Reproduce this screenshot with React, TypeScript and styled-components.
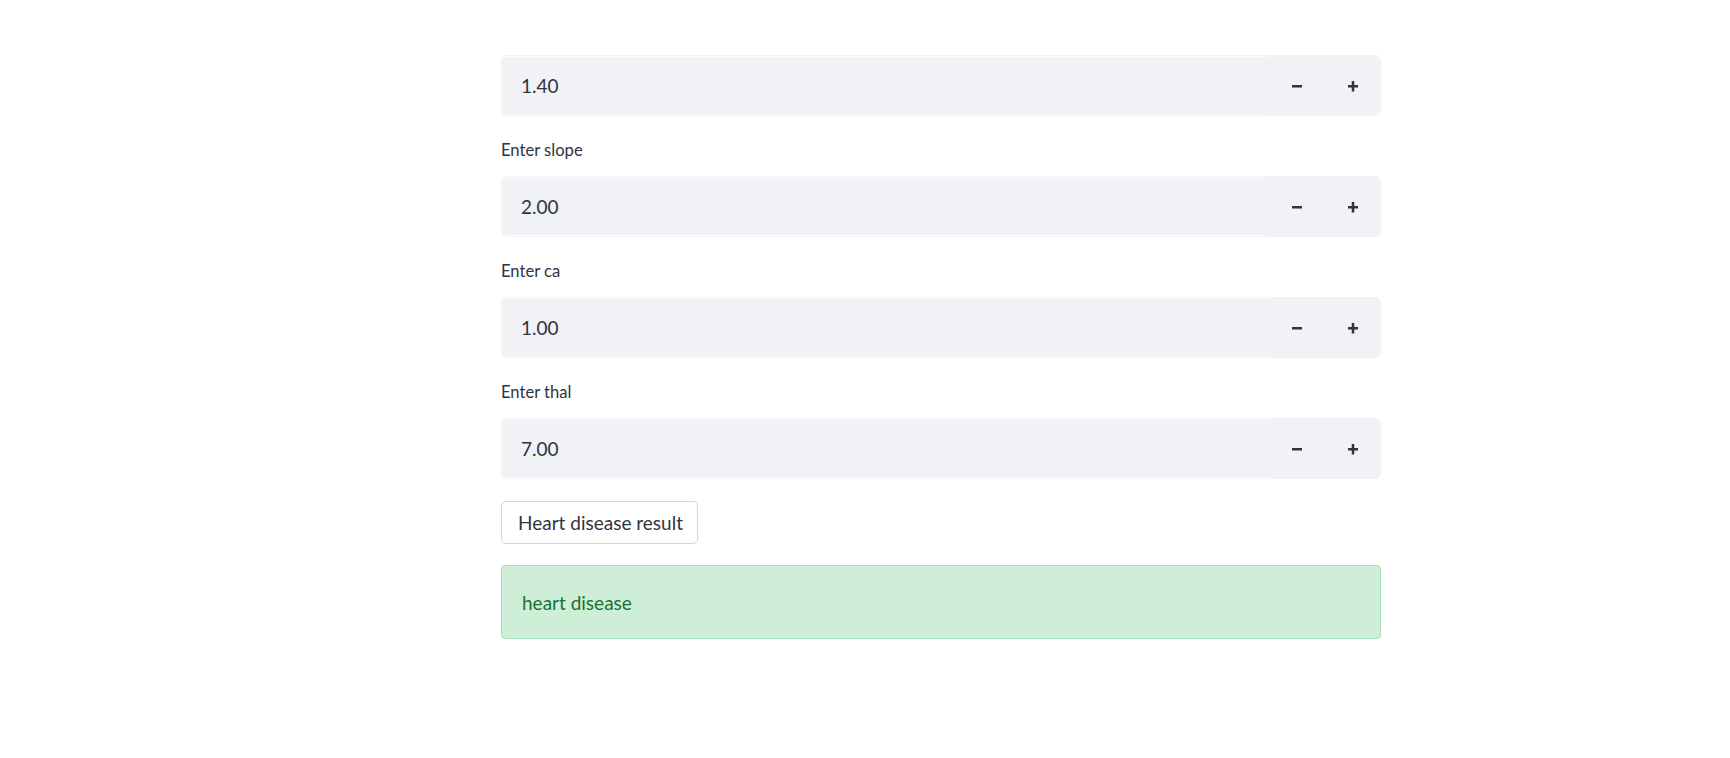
import React from "react";
import styled, { createGlobalStyle } from "styled-components";

const Global = createGlobalStyle`
  html, body { margin: 0; padding: 0; background: #ffffff; }
  body { font-family: "Lato", "Noto Sans", sans-serif; color: #31333f; }
`;

const Page = styled.div`
  width: 100%;
  display: flex;
  padding-left: 501px;
  box-sizing: border-box;
`;

const Main = styled.main`
  width: 880px;
  padding-top: 55px;
  display: flex;
  flex-direction: column;
`;

const Block = styled.div<{ $gap?: number }>`
  display: flex;
  flex-direction: column;
  margin-bottom: ${(p) => p.$gap ?? 22}px;
`;

const Label = styled.label`
  font-size: 16.6px;
  line-height: 24px;
  height: 24px;
  margin-bottom: 14px;
  color: #31333f;
`;

const InputBox = styled.div`
  height: 61px;
  box-sizing: border-box;
  display: flex;
  background: #f0f2f6;
  border-radius: 6px;
  overflow: hidden;
`;

const Field = styled.div`
  flex: 1;
  box-sizing: border-box;
  display: flex;
  align-items: center;
  padding-left: 20px;
  border-top: 1px solid #fafbfc;
  border-bottom: 1px solid #fafbfc;
  margin: 1px 0;
  font-size: 19px;
  color: #31333f;
`;

const Step = styled.button`
  width: 56px;
  height: 100%;
  border: none;
  background: transparent;
  padding: 0;
  display: flex;
  align-items: center;
  justify-content: center;
  color: #31333f;
  cursor: pointer;
`;

const Button = styled.button`
  align-self: flex-start;
  height: 43px;
  padding: 0 14px 0 16px;
  box-sizing: border-box;
  background: #ffffff;
  border: 1px solid rgba(49, 51, 63, 0.2);
  border-radius: 5px;
  font-family: "Lato", "Noto Sans", sans-serif;
  font-size: 19px;
  color: #31333f;
  margin-bottom: 21px;
`;

const Alert = styled.div`
  height: 74px;
  box-sizing: border-box;
  display: flex;
  align-items: center;
  padding-left: 20px;
  background: #ceeed8;
  border: 1px solid #a6e0b8;
  border-radius: 4px;
  font-size: 19px;
  color: #177233;
`;

const Minus = () => (
  <svg width="12" height="12" viewBox="0 0 12 12">
    <rect x="1" y="5" width="10" height="2.5" fill="currentColor" />
  </svg>
);

const Plus = () => (
  <svg width="12" height="12" viewBox="0 0 12 12">
    <rect x="1" y="5" width="10" height="2.5" fill="currentColor" />
    <rect x="4.75" y="1" width="2.5" height="10.5" fill="currentColor" />
  </svg>
);

const NumberInput = ({ value }: { value: string }) => (
  <InputBox>
    <Field>{value}</Field>
    <Step aria-label="decrement">
      <Minus />
    </Step>
    <Step aria-label="increment">
      <Plus />
    </Step>
  </InputBox>
);

const fields: { label?: string; value: string }[] = [
  { value: "1.40" },
  { label: "Enter slope", value: "2.00" },
  { label: "Enter ca", value: "1.00" },
  { label: "Enter thal", value: "7.00" },
];

export default function App() {
  return (
    <>
      <Global />
      <Page>
        <Main>
          {fields.map((f) => (
            <Block key={f.value + (f.label ?? "")}>
              {f.label && <Label>{f.label}</Label>}
              <NumberInput value={f.value} />
            </Block>
          ))}
          <Button>Heart disease result</Button>
          <Alert>heart disease</Alert>
        </Main>
      </Page>
    </>
  );
}
